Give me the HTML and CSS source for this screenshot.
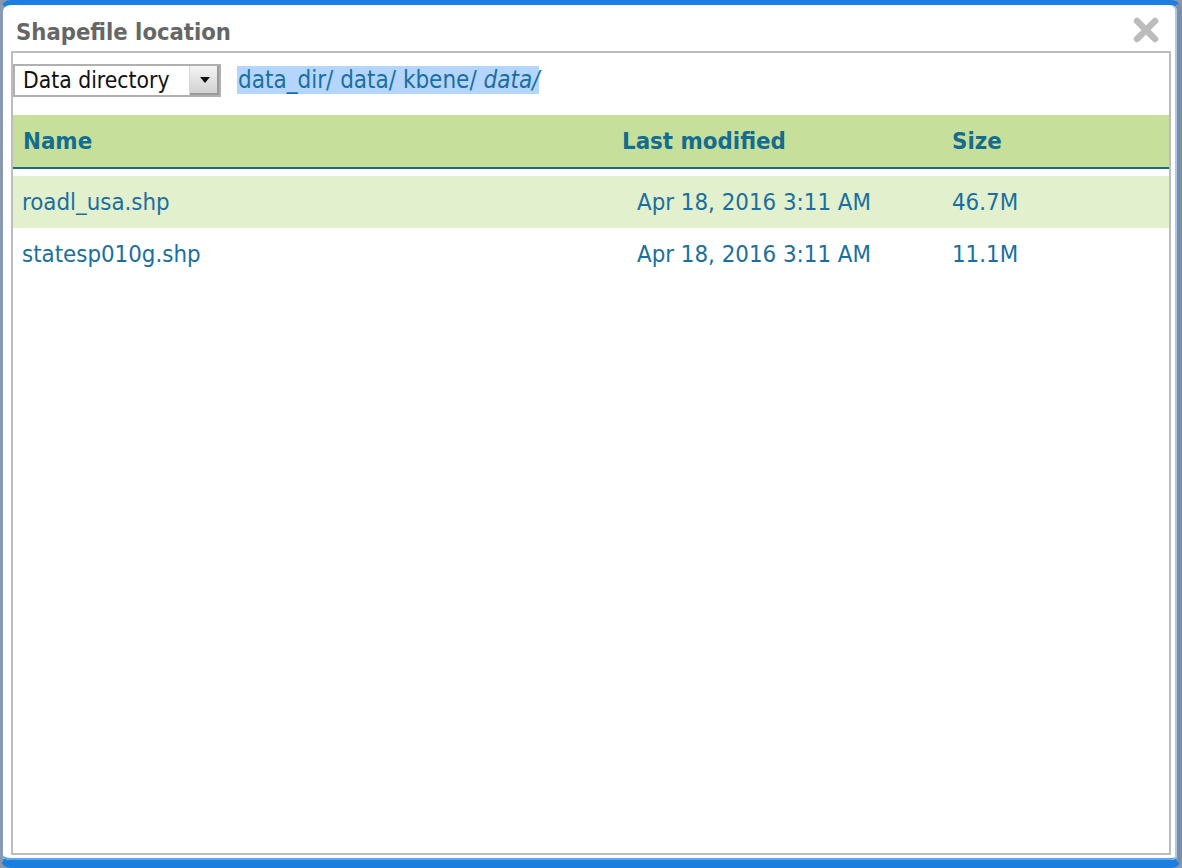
FILE: index.html
```html
<!DOCTYPE html>
<html>
<head>
<meta charset="utf-8">
<title>Shapefile location</title>
<link rel="stylesheet" href="styles.css">
</head>
<body>
<div class="window">
  <div class="titlebar">
    <div class="title">Shapefile location</div>
    <svg class="close" width="30" height="30" viewBox="0 0 30 30">
      <path d="M6 6 L24 24 M24 6 L6 24" stroke="#bcbcbc" stroke-width="6.5" stroke-linecap="round"/>
    </svg>
  </div>
  <div class="panel">
    <div class="toolbar">
      <div class="select">
        <span class="select-text">Data directory</span>
        <span class="select-btn"><svg width="12" height="8" viewBox="0 0 12 8"><path d="M1 1 H11 L6 7 Z" fill="#111"/></svg></span>
      </div>
      <div class="path"><span>data_dir/ data/ kbene/ </span><em>data/</em></div>
    </div>
    <div class="table">
      <div class="row head">
        <div class="c name">Name</div>
        <div class="c mod">Last modified</div>
        <div class="c size">Size</div>
      </div>
      <div class="row item alt">
        <div class="c name">roadl_usa.shp</div>
        <div class="c mod">Apr 18, 2016 3:11 AM</div>
        <div class="c size">46.7M</div>
      </div>
      <div class="row item">
        <div class="c name">statesp010g.shp</div>
        <div class="c mod">Apr 18, 2016 3:11 AM</div>
        <div class="c size">11.1M</div>
      </div>
    </div>
  </div>
</div>
</body>
</html>
```

FILE: styles.css
```css
html, body {
  margin: 0;
  padding: 0;
  background: #8796aa;
}
body {
  width: 1182px;
  height: 868px;
  overflow: hidden;
  font-family: "DejaVu Sans Condensed", "DejaVu Sans", sans-serif;
}
.window {
  box-sizing: border-box;
  width: 1182px;
  height: 868px;
  background: #fff;
  border-radius: 11px;
  border-top: 5px solid #1c7fe0;
  border-bottom: 8px solid #1c7fe0;
  border-left: 3px solid #8a9ab0;
  border-right: 5px solid #7d8da3;
  box-shadow: inset -2px 0 0 #a9c8ec, inset 0 -2px 0 #5aa6ee;
  padding: 0 6px 5px 8px;
  display: flex;
  flex-direction: column;
}
.titlebar {
  height: 46px;
  display: flex;
  align-items: center;
  justify-content: space-between;
  padding-left: 5px;
  padding-right: 10px;
}
.title {
  font-weight: bold;
  font-size: 23.6px;
  color: #666;
  margin-top: 8px;
}
.close {
  margin-top: 4px;
}
.panel {
  flex: 1;
  border: 2px solid #bdbdbd;
  display: flex;
  flex-direction: column;
}
.toolbar {
  display: flex;
  align-items: center;
  height: 58px;
  padding-bottom: 4px;
  box-sizing: border-box;
  margin-bottom: 4px;
}
.select {
  box-sizing: border-box;
  width: 208px;
  height: 33px;
  border: 2px solid #b0b0b0;
  background: #fff;
  display: flex;
  align-items: center;
  justify-content: space-between;
}
.select-text {
  font-size: 22.7px;
  color: #111;
  padding-left: 8px;
}
.select-btn {
  width: 29px;
  height: 29px;
  background: linear-gradient(#f4f4f4, #cfcfcf);
  border-left: 1px solid #d6d6d6;
  box-shadow: inset -2px -2px 0 #9a9a9a;
  display: flex;
  align-items: center;
  justify-content: center;
}
.path {
  margin-left: 16px;
  background: #b4d5fe;
  color: #1a6f9f;
  font-size: 24px;
  padding: 0 0 0 1px;
  line-height: 28px;
}
.path em {
  font-style: italic;
}
.table {
  display: flex;
  flex-direction: column;
}
.row {
  display: grid;
  grid-template-columns: 598px 330px 1fr;
  align-items: center;
}
.head {
  background: #c6e09c;
  height: 52px;
  border-bottom: 2px solid #1b6a80;
  color: #156c8e;
  font-weight: bold;
  font-size: 23.8px;
}
.head .c.name { padding-left: 10px; }
.head .c.mod { padding-left: 11px; }
.head .c.size { padding-left: 11px; }
.item {
  height: 52px;
  color: #1a6f9f;
  font-size: 23.8px;
}
.item.alt {
  background: #e2f0cd;
  margin-top: 7px;
}
.item .c.name { padding-left: 9px; }
.item .c.mod { padding-left: 26px; }
.item .c.size { padding-left: 11px; }
```
